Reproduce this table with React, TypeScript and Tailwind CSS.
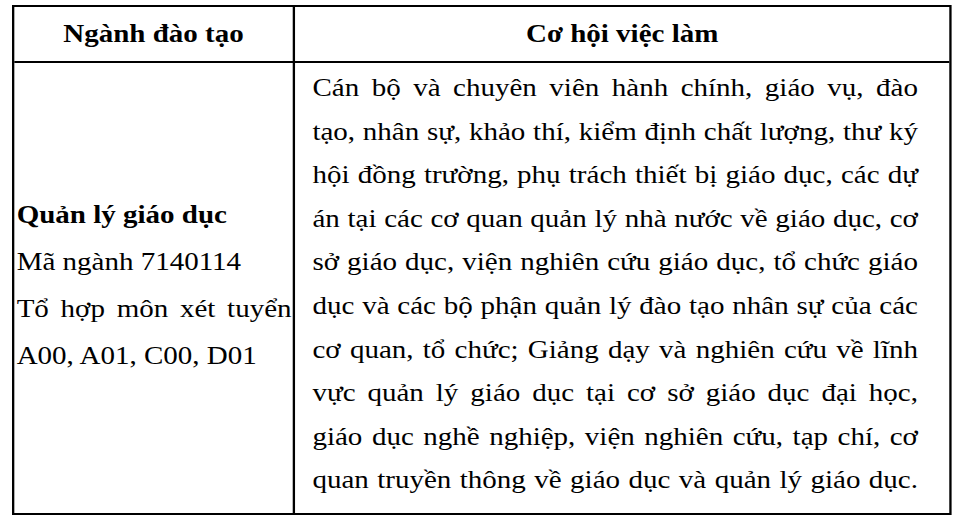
const jobLines = [
  "Cán bộ và chuyên viên hành chính, giáo vụ, đào",
  "tạo, nhân sự, khảo thí, kiểm định chất lượng, thư ký",
  "hội đồng trường, phụ trách thiết bị giáo dục, các dự",
  "án tại các cơ quan quản lý nhà nước về giáo dục, cơ",
  "sở giáo dục, viện nghiên cứu giáo dục, tổ chức giáo",
  "dục và các bộ phận quản lý đào tạo nhân sự của các",
  "cơ quan, tổ chức; Giảng dạy và nghiên cứu về lĩnh",
  "vực quản lý giáo dục tại cơ sở giáo dục đại học,",
  "giáo dục nghề nghiệp, viện nghiên cứu, tạp chí, cơ",
  "quan truyền thông về giáo dục và quản lý giáo dục.",
];

function JustifiedLine({ text }: { text: string }) {
  return (
    <div className="whitespace-nowrap text-justify [text-align-last:justify]">
      {text}
    </div>
  );
}

export default function App() {
  return (
    <div className="w-[960px] h-[522px] bg-white overflow-hidden pt-[5px] pl-[12px] [font-family:'Liberation_Serif',serif] text-[25px] text-black">
      {/* source image is stretched horizontally, so the table is too */}
      <div className="w-[810px] border-2 border-black origin-top-left scale-x-[1.16]">
        <div className="grid grid-cols-[242px_1fr] border-b-2 border-black">
          <div className="h-[54px] flex items-center justify-center pb-[2px] border-r-2 border-black font-bold leading-none">
            Ngành đào tạo
          </div>
          <div className="h-[54px] flex items-center justify-center pb-[2px] font-bold leading-none">
            Cơ hội việc làm
          </div>
        </div>

        <div className="grid grid-cols-[242px_1fr]">
          <div className="flex flex-col justify-center pl-[2px] pr-[1px] pb-[6px] border-r-2 border-black leading-[47px]">
            <div className="font-bold">Quản lý giáo dục</div>
            <div>Mã ngành 7140114</div>
            <JustifiedLine text="Tổ hợp môn xét tuyển" />
            <div>A00, A01, C00, D01</div>
          </div>
          <div className="pl-[15px] pr-[27px] pt-[3px] pb-[11px] leading-[43.6px]">
            {jobLines.map((line) => (
              <JustifiedLine key={line} text={line} />
            ))}
          </div>
        </div>
      </div>
    </div>
  );
}
